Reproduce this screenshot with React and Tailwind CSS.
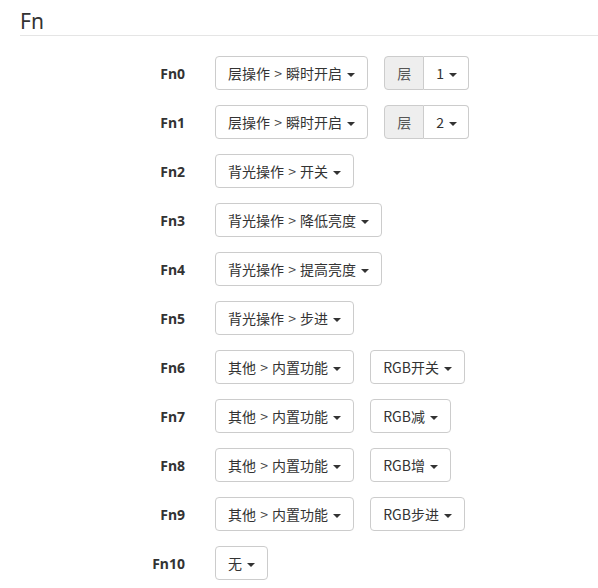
import React from "react";

const Caret = () => (
  <span className="ml-[2px] inline-block h-0 w-0 align-middle border-t-[4px] border-t-[#333] border-x-[4px] border-x-transparent" />
);

const cjk = { fontFamily: '"Noto Sans CJK SC", "Noto Sans", sans-serif' };

const Label = ({ text }) => {
  const parts = text.split(" > ");
  if (parts.length < 2) return <>{text}</>;
  return (
    <>
      {parts[0]} <span className="mx-[1px] text-[#444]">&gt;</span> {parts[1]}
    </>
  );
};

const Btn = ({ children }) => (
  <button
    className="h-[34px] rounded-[4px] border border-[#ccc] bg-white px-[12px] text-[14px] leading-[20px] text-[#333] whitespace-nowrap"
    style={cjk}
  >
    <Label text={children} /> <Caret />
  </button>
);

const LayerGroup = ({ n }) => (
  <div className="flex h-[34px]" style={cjk}>
    <span className="flex items-center rounded-l-[4px] border border-[#ccc] bg-[#eee] px-[12px] text-[14px] text-[#555]">层</span>
    <button className="rounded-r-[4px] border border-l-0 border-[#ccc] bg-white pl-[12px] pr-[11px] text-[14px] leading-[20px] text-[#333]">
      {n} <Caret />
    </button>
  </div>
);

const rows = [
  { k: "Fn0", a: "层操作 > 瞬时开启", layer: "1" },
  { k: "Fn1", a: "层操作 > 瞬时开启", layer: "2" },
  { k: "Fn2", a: "背光操作 > 开关" },
  { k: "Fn3", a: "背光操作 > 降低亮度" },
  { k: "Fn4", a: "背光操作 > 提高亮度" },
  { k: "Fn5", a: "背光操作 > 步进" },
  { k: "Fn6", a: "其他 > 内置功能", b: "RGB开关" },
  { k: "Fn7", a: "其他 > 内置功能", b: "RGB减" },
  { k: "Fn8", a: "其他 > 内置功能", b: "RGB增" },
  { k: "Fn9", a: "其他 > 内置功能", b: "RGB步进" },
  { k: "Fn10", a: "无" },
];

export default function App() {
  return (
    <div
      className="min-h-[588px] bg-white pl-[20px] text-[#333]"
      style={{ fontFamily: '"Noto Sans", "Noto Sans CJK SC", sans-serif' }}
    >
      <div className="pt-[6px]">
        <div className="h-[30px] border-b border-[#e5e5e5] text-[21px] leading-[30px] text-[#333]">Fn</div>
      </div>
      <div className="mt-[20px] flex flex-col gap-[15px]">
        {rows.map((r) => (
          <div key={r.k} className="flex h-[34px] items-center">
            <div className="w-[165px] text-right text-[14px] font-bold">{r.k}</div>
            <div className="ml-[30px] flex items-center gap-[16px]">
              <Btn>{r.a}</Btn>
              {r.layer && <LayerGroup n={r.layer} />}
              {r.b && <Btn>{r.b}</Btn>}
            </div>
          </div>
        ))}
      </div>
    </div>
  );
}
